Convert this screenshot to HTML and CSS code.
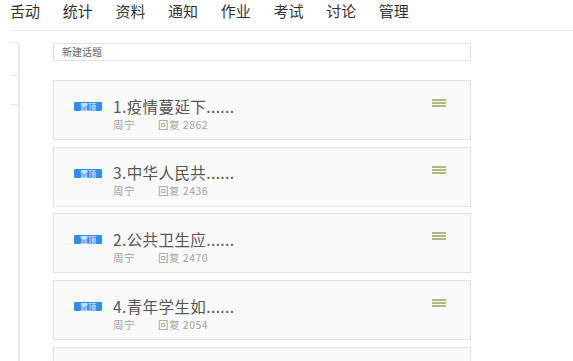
FILE: index.html
```html
<!DOCTYPE html>
<html lang="zh">
<head>
<meta charset="UTF-8" />
<meta name="viewport" content="width=device-width, initial-scale=1.0">
<title>讨论</title>
<link rel="stylesheet" href="styles.css">
</head>
<body>

<!-- Top tabs -->
<div class="topnav">
  <span class="tab">舌动</span>
  <span class="tab">统计</span>
  <span class="tab">资料</span>
  <span class="tab">通知</span>
  <span class="tab">作业</span>
  <span class="tab">考试</span>
  <span class="tab">讨论</span>
  <span class="tab">管理</span>
</div>

<div class="main">
  <div class="sidebar">
    <div class="side-item"></div>
    <div class="side-item"></div>
  </div>

  <div class="content">
    <div class="new-topic">新建话题</div>

    <div class="topic-list">
      <div class="topic-card">
        <div class="topic-info">
          <div class="topic-title"><span class="badge">置顶</span><span>1.疫情蔓延下......</span></div>
          <div class="topic-meta"><span class="author">周宁</span><span>回复 2862</span></div>
        </div>
        <svg class="menu-icon" width="14" height="8" viewBox="0 0 14 8"><path d="M0 1h14M0 4h14M0 7h14" stroke="#8ea65a" stroke-width="1.3"/></svg>
      </div>

      <div class="topic-card">
        <div class="topic-info">
          <div class="topic-title"><span class="badge">置顶</span><span>3.中华人民共......</span></div>
          <div class="topic-meta"><span class="author">周宁</span><span>回复 2436</span></div>
        </div>
        <svg class="menu-icon" width="14" height="8" viewBox="0 0 14 8"><path d="M0 1h14M0 4h14M0 7h14" stroke="#8ea65a" stroke-width="1.3"/></svg>
      </div>

      <div class="topic-card">
        <div class="topic-info">
          <div class="topic-title"><span class="badge">置顶</span><span>2.公共卫生应......</span></div>
          <div class="topic-meta"><span class="author">周宁</span><span>回复 2470</span></div>
        </div>
        <svg class="menu-icon" width="14" height="8" viewBox="0 0 14 8"><path d="M0 1h14M0 4h14M0 7h14" stroke="#8ea65a" stroke-width="1.3"/></svg>
      </div>

      <div class="topic-card">
        <div class="topic-info">
          <div class="topic-title"><span class="badge">置顶</span><span>4.青年学生如......</span></div>
          <div class="topic-meta"><span class="author">周宁</span><span>回复 2054</span></div>
        </div>
        <svg class="menu-icon" width="14" height="8" viewBox="0 0 14 8"><path d="M0 1h14M0 4h14M0 7h14" stroke="#8ea65a" stroke-width="1.3"/></svg>
      </div>

      <div class="topic-card"></div>
    </div>
  </div>
</div>

</body>
</html>
```

FILE: styles.css
```css
* {
  box-sizing: border-box;
  margin: 0;
  padding: 0;
}
html, body {
  height: 361px;
  overflow: hidden;
}
body {
  font-family: "Noto Sans CJK SC", "Noto Sans", sans-serif;
  background: #fff;
  color: #333;
}
.topnav {
  display: flex;
  gap: 22.7px;
  margin-left: 10px;
  height: 31px;
  padding-top: 1px;
  border-bottom: 1px solid #e8e8e8;
}
.tab {
  font-size: 15px;
  line-height: 20px;
  color: #333;
  width: 30px;
  white-space: nowrap;
}
.main {
  display: flex;
  align-items: flex-start;
  height: 330px;
  overflow: hidden;
}
.sidebar {
  width: 10px;
  margin-left: 10px;
  margin-top: 11px;
  height: 319px;
  border-top: 1px solid #e6e6e6;
  border-right: 2px solid #e9e9e9;
  border-top-right-radius: 4px;
}
.side-item {
  height: 33px;
  border-bottom: 1px solid #e6e6e6;
}
.side-item + .side-item {
  height: 29px;
}
.content {
  width: 418px;
  margin-left: 33px;
  margin-top: 12px;
}
.new-topic {
  height: 18px;
  border: 1px solid #e2e2e2;
  font-size: 10px;
  line-height: 16px;
  color: #666;
  padding-left: 8px;
  margin-bottom: 19px;
}
.topic-card {
  display: flex;
  justify-content: space-between;
  align-items: flex-start;
  height: 60px;
  margin-bottom: 6.7px;
  padding: 14.5px 24px 0 20px;
  background: #fafafa;
  border: 1px solid #e2e2e2;
}
.topic-title {
  display: flex;
  align-items: center;
  gap: 11px;
  font-size: 15.5px;
  line-height: 20px;
  letter-spacing: 0.4px;
  color: #555;
}
.badge {
  display: inline-block;
  width: 28px;
  height: 9px;
  background: #2f8ff0;
  color: #fff;
  font-size: 8px;
  line-height: 9px;
  letter-spacing: 0;
  text-align: center;
  border-radius: 1px;
  margin-top: 2px;
}
.topic-meta {
  display: flex;
  margin-top: 3px;
  margin-left: 39px;
  font-size: 10.5px;
  line-height: 12px;
  letter-spacing: 0.5px;
  color: #a0a0a0;
}
.author {
  width: 45px;
}
.menu-icon {
  margin-top: 3.5px;
}
```
